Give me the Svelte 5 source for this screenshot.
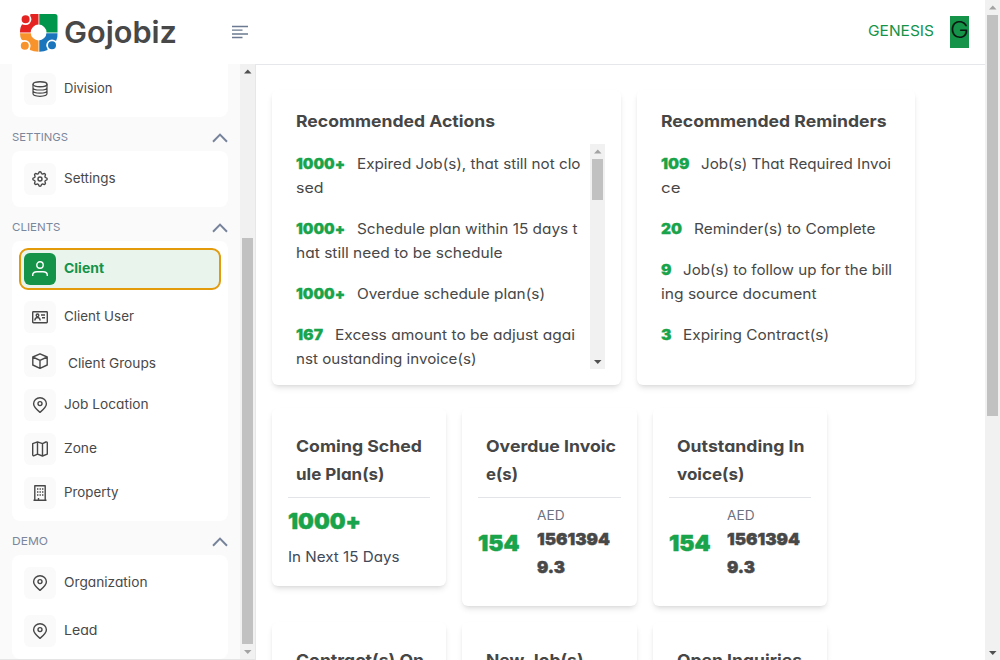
<script>
  // Widens a line of text to a given width, keeping its height.
  function fit(node, width) {
    const natural = node.getBoundingClientRect().width;
    node.style.width = `${width}px`;
    node.style.transform = `scaleX(${width / natural})`;
  }

  const settings = [{ icon: 'gear', label: 'Settings', w: 51.5 }];
  const clients = [
    { icon: 'user', label: 'Client', w: 40, active: true },
    { icon: 'card', label: 'Client User', w: 70 },
    { icon: 'box', label: 'Client Groups', w: 88, nudge: true },
    { icon: 'pin', label: 'Job Location', w: 84.5 },
    { icon: 'map', label: 'Zone', w: 33 },
    { icon: 'building', label: 'Property', w: 54.5 }
  ];
  const demo = [
    { icon: 'pin', label: 'Organization', w: 83.5 },
    { icon: 'pin', label: 'Lead', w: 33.5 }
  ];
  const groups = [
    { cls: 'first', items: [{ icon: 'db', label: 'Division', w: 48.5 }] },
    { title: 'SETTINGS', tw: 56, cls: '', items: settings },
    { title: 'CLIENTS', tw: 48.5, cls: 'clients', items: clients },
    { title: 'DEMO', tw: 36, cls: 'demo', items: demo }
  ];

  const actions = [
    { n: '1000+', nw: 49, lines: [['Expired Job(s), that still not clo', 223.5], ['sed', 27.5]] },
    { n: '1000+', nw: 49, lines: [['Schedule plan within 15 days t', 220.5], ['hat still need to be schedule', 206.5]] },
    { n: '1000+', nw: 49, lines: [['Overdue schedule plan(s)', 188]] },
    { n: '167', nw: 27, lines: [['Excess amount to be adjust agai', 240], ['nst oustanding invoice(s)', 180.5]] }
  ];
  const reminders = [
    { n: '109', nw: 28.5, lines: [['Job(s) That Required Invoi', 190], ['ce', 19.5]] },
    { n: '20', nw: 21, lines: [['Reminder(s) to Complete', 181.5]] },
    { n: '9', nw: 10.5, lines: [['Job(s) to follow up for the bill', 209], ['ing source document', 155.5]] },
    { n: '3', nw: 10.5, lines: [['Expiring Contract(s)', 146]] }
  ];
  const invoices = [
    { lines: [['Overdue Invoic', 130], ['e(s)', 32]] },
    { lines: [['Outstanding In', 127.5], ['voice(s)', 67.5]] }
  ];
  const lower = [
    ['Contract(s) On', 128],
    ['New Job(s)', 97.5],
    ['Open Inquiries', 125]
  ];
</script>

{#snippet icon(name)}
  <svg class="icon" viewBox="0 0 16 16" width="16" height="16">
    {#if name === 'db'}
      <ellipse cx="8" cy="3.2" rx="7" ry="2.5" />
      <path d="M1 3.2v9.4c0 1.500 3.100 2.700 7 2.700s7-1.200 7-2.700V3.200M1 6.400c0 1.500 3.100 2.600 7 2.600s7-1.100 7-2.600M1 9.600c0 1.500 3.100 2.600 7 2.600s7-1.100 7-2.600" stroke-width="1.200" />
    {:else if name === 'gear'}
      <circle cx="8" cy="8" r="2" />
      <path d="M6.6 2.2C7 .3 9 .3 9.4 2.2a1.2 1.2 0 0 0 1.7.7c1.7-1 3 .3 2 2a1.2 1.2 0 0 0 .7 1.7c1.9.4 1.9 2.4 0 2.8a1.2 1.2 0 0 0-.7 1.7c1 1.7-.3 3-2 2a1.2 1.2 0 0 0-1.7.7c-.4 1.9-2.4 1.9-2.8 0a1.2 1.2 0 0 0-1.7-.7c-1.7 1-3-.3-2-2a1.2 1.2 0 0 0-.7-1.7c-1.9-.4-1.9-2.4 0-2.8a1.2 1.2 0 0 0 .7-1.7c-1-1.7.3-3 2-2a1.2 1.2 0 0 0 1.7-.7Z" />
    {:else if name === 'user'}
      <circle cx="8" cy="4" r="3.2" />
      <path d="M.7 15v-1c0-2.2 2-3.3 4.3-3.3h6c2.300 0 4.300 1.100 4.300 3.300v1" />
    {:else if name === 'card'}
      <rect x=".7" y="2.7" width="14.6" height="11" rx=".7" />
      <circle cx="5.5" cy="6.3" r="1.3" />
      <path d="M2.800 11.500c.2-2 1.200-3 2.700-3s2.500 1 2.700 3M9 6h4M10 8.800h3" />
    {:else if name === 'box'}
      <path d="M8 .8 15.200 4v8L8 15.300.8 12V4ZM.8 4 8 7.300 15.200 4M8 7.300v8" />
    {:else if name === 'pin'}
      <path d="M8 15.400C4.300 12.400 1.600 9.700 1.600 6.800a6.400 6.100 0 0 1 12.800 0c0 2.900-2.700 5.600-6.400 8.600Z" />
      <circle cx="8" cy="6.600" r="2" />
    {:else if name === 'map'}
      <path d="M.7 2.600 5.500.9l5 1.700L13.800 1c.8-.3 1.500.1 1.500.9v11.200l-4.800 1.900-5-1.900L2.200 14.600c-.8.3-1.500-.1-1.500-.9ZM5.500.9v12.200M10.500 2.600V15" />
    {:else}
      <path d="M2.800 15V.8h10.400V15M1.500 15.200h13" />
      <path class="dots" d="M5.700 3.200v8M8.200 3.200v8M10.700 3.200v8" />
      <path d="M6.500 15v-2" />
    {/if}
  </svg>
{/snippet}

{#snippet entries(list)}
  <div class="entries">
    {#each list as e}
      <div class="entry">
        <div><b class="num" use:fit={e.nw}>{e.n}</b><span class="txt" use:fit={e.lines[0][1]}>{e.lines[0][0]}</span></div>
        {#if e.lines[1]}<div><span class="txt" use:fit={e.lines[1][1]}>{e.lines[1][0]}</span></div>{/if}
      </div>
    {/each}
  </div>
{/snippet}

{#snippet arrow(dir, dark)}
  <svg class="arrow" class:dark viewBox="0 0 15 15" width="15" height="15">
    <path d={dir === 'up' ? 'M4 9.500h7.500L7.750 5.500Z' : 'M4 6h7.500L7.750 10Z'} />
  </svg>
{/snippet}

<div class="app">
  <div class="page">
    <header>
      <div class="brand">
        <svg width="38" height="38" viewBox="0 0 38 38">
          <path fill="#e52421" d="M0 18.400Q0 13 2 10.500L9 8l1.500-8h8v18.400Z" />
          <path fill="#00964b" d="M19.300 0h15.700q2.500 0 2.500 2.500v15.900H19.300Z" />
          <path fill="#f7932a" d="M0 19.300h18.500v18.400q-5 0-8.500-1.700L8 29l-6.500-3.500Q0 23 0 19.300Z" />
          <path fill="#1b75bc" d="M19.300 19.300h18.200q.3 4-1.200 7.200L29 29l-1.500 7q-3 1.700-8.200 1.700Z" />
          <circle cx="18.600" cy="18.500" r="7.900" fill="#fff" />
          <g stroke="#fff" stroke-width="1.800">
            <circle cx="5.600" cy="5.300" r="4.900" fill="#e52421" />
            <circle cx="4.800" cy="31.800" r="4.900" fill="#f7932a" />
            <circle cx="32" cy="31.300" r="4.900" fill="#1b75bc" />
          </g>
        </svg>
        <div class="wordmark"><span use:fit={113}>Gojobiz</span></div>
      </div>
      <svg class="menu" width="16" height="14" viewBox="0 0 16 14">
        <path d="M0 1.500h16M0 5.200h10.500M0 9h16M0 12.500h10.500" />
      </svg>
      <div class="account">
        <span use:fit={66}>GENESIS</span>
        <div class="avatar"><span use:fit={19}>G</span></div>
      </div>
    </header>

    <div class="body">
      <nav>
        <div class="groups">
          {#each groups as g}
            {#if g.title}
              <div class="heading">
                <span use:fit={g.tw}>{g.title}</span>
                <svg width="16" height="10" viewBox="0 0 16 10"><path d="M1 8.700 8 1.600l7 7.100" /></svg>
              </div>
            {/if}
            <div class="group {g.cls}">
              {#each g.items as i}
                <div class="item" class:active={i.active}>
                  <div class="tile">{@render icon(i.icon)}</div>
                  <div class="label" class:nudge={i.nudge}><span use:fit={i.w}>{i.label}</span></div>
                </div>
              {/each}
            </div>
          {/each}
        </div>
        <div class="bar side">
          {@render arrow('up', true)}
          <div class="thumb"></div>
          {@render arrow('down', false)}
        </div>
      </nav>

      <main>
        <div class="row top">
          <section class="panel wide">
            <h2><span use:fit={199}>Recommended Actions</span></h2>
            <div class="scroller">
              {@render entries(actions)}
              <div class="bar inner">
                {@render arrow('up', false)}
                <div class="thumb"></div>
                {@render arrow('down', true)}
              </div>
            </div>
          </section>
          <section class="panel">
            <h2><span use:fit={225.5}>Recommended Reminders</span></h2>
            <div class="scroller">{@render entries(reminders)}</div>
          </section>
        </div>

        <div class="row stats">
          <section class="stat short">
            <h2><span use:fit={126}>Coming Sched</span><br /><span use:fit={88.5}>ule Plan(s)</span></h2>
            <div class="big"><span use:fit={73}>1000+</span></div>
            <div class="note"><span use:fit={111.5}>In Next 15 Days</span></div>
          </section>
          {#each invoices as v}
            <section class="stat">
              <h2><span use:fit={v.lines[0][1]}>{v.lines[0][0]}</span><br /><span use:fit={v.lines[1][1]}>{v.lines[1][0]}</span></h2>
              <div class="amounts">
                <div class="big"><span use:fit={41.5}>154</span></div>
                <div class="money">
                  <div class="cur"><span use:fit={27.5}>AED</span></div>
                  <b use:fit={73}>1561394</b><br /><b use:fit={28}>9.3</b>
                </div>
              </div>
            </section>
          {/each}
        </div>

        <div class="row stats">
          {#each lower as l}
            <section class="stat"><h2><span use:fit={l[1]}>{l[0]}</span></h2></section>
          {/each}
        </div>
      </main>
    </div>
  </div>
  <div class="bar window">
    {@render arrow('up', false)}
    <div class="thumb"></div>
    {@render arrow('down', true)}
  </div>
</div>

<style>
  :global(body) { margin: 0; overflow: hidden; background: #fff; }
  .app {
    display: flex; width: 1000px; height: 660px; overflow: hidden;
    font-family: Inter, sans-serif; font-feature-settings: 'cv11', 'calt' 0;
    font-size: 14.500px; font-weight: 370; line-height: 24px; color: #484848; white-space: nowrap;
  }
  .app :global(*) { box-sizing: border-box; }
  span, b { display: inline-block; transform-origin: 0 50%; }
  .page { width: 985px; height: 660px; display: flex; flex-direction: column; }
  header { height: 64px; flex: none; display: flex; align-items: center; padding: 0 16px 0 20px; }
  .brand { display: flex; align-items: center; gap: 5px; width: 212px; }
  .brand svg { margin-top: 1px; overflow: visible; }
  .wordmark { font-size: 30px; font-weight: 620; line-height: 40px; margin-left: 1px; }
  .menu { stroke: #6b7a90; stroke-width: 1.300; fill: none; }
  .account { margin-left: auto; display: flex; align-items: center; gap: 16px; color: #149349; font-size: 15px; }
  .account > span { margin-top: -3px; }
  .avatar { width: 19px; height: 32px; background: #149349; color: #0b1710; font-size: 23px; font-weight: 350; line-height: 28px; }

  .body { display: flex; flex: 1; height: 596px; }
  nav { width: 256px; background: #fafafa; border-right: 1px solid #e5e7eb; border-bottom: 1px solid #e5e5e5; display: flex; overflow: hidden; }
  .groups { width: 240px; padding: 0 12px; flex: none; }
  .group { background: #fff; border-radius: 8px; padding: 12px; display: flex; flex-direction: column; gap: 12px; }
  .first { border-radius: 0 0 8px 8px; padding-top: 9px; }
  .demo { gap: 16px; }
  .heading { height: 34px; padding-top: 13px; display: flex; align-items: flex-start; justify-content: space-between; color: #7b879c; font-size: 11px; font-weight: 400; line-height: 16px; }
  .heading span { margin-top: -1px; }
  .heading svg { margin-top: 3px; fill: none; stroke: #76839a; stroke-width: 2; }
  .item { display: flex; height: 32px; gap: 8px; font-size: 13px; line-height: 30px; }
  .tile { width: 32px; height: 32px; border-radius: 6px; background: #fafafa; display: flex; align-items: center; justify-content: center; flex: none; }
  .icon { fill: none; stroke: #484848; stroke-width: 1.400; stroke-linejoin: round; }
  .dots { stroke-width: 1.400; stroke-dasharray: 1.500 1.500; }
  .nudge { padding: 3px 0 0 4px; }
  .active { margin: -5px -5px -1px; width: 202px; height: 42px; padding: 3px; border: 2px solid #e39a0b; border-radius: 9px; background: #e8f4ec; color: #149349; font-weight: 700; }
  .active .tile { background: #149349; }
  .active .icon { stroke: #fff; }

  .bar { width: 15px; background: #f1f1f1; display: flex; flex-direction: column; justify-content: space-between; flex: none; }
  .thumb { width: 11px; margin: 0 2px; background: #c1c1c1; }
  .arrow { display: block; fill: #a3a3a3; flex: none; }
  .arrow.dark { fill: #505050; }
  .side { height: 595px; }
  .side .thumb { height: 406px; margin-top: auto; }
  .inner { height: 225px; }
  .inner .thumb { height: 41px; margin-bottom: auto; }
  .window { height: 660px; }
  .window .thumb { height: 401px; margin-bottom: auto; }

  main { width: 729px; height: 596px; border-top: 1px solid #e5e7eb; padding: 24px 16px; display: flex; flex-direction: column; overflow: hidden; }
  .row { display: flex; gap: 16px; flex: none; align-items: flex-start; }
  .top { margin-bottom: 23px; padding-top: 1px; }
  section { background: #fff; border-radius: 6px; box-shadow: 0 4px 6px -1px rgba(0, 0, 0, 0.100), 0 2px 4px -2px rgba(0, 0, 0, 0.100); flex: none; }
  .panel { width: 278px; height: 295px; padding: 17px 16px 16px 23.500px; }
  .panel.wide { width: 349px; padding-left: 23.500px; }
  h2 { margin: 0; font-size: 16.500px; line-height: 28px; font-weight: 650; color: #464646; }
  .scroller { display: flex; height: 225px; margin-top: 9px; }
  .entries { width: 294.500px; flex: none; padding-top: 8px; display: flex; flex-direction: column; gap: 17px; }
  .num { color: #19a34a; font-weight: 900; margin-right: 12px; -webkit-text-stroke: 0.300px #19a34a; }

  .stats { margin-bottom: 16px; }
  .stat { width: 174.330px; height: 198px; padding: 24px 16px 0; }
  .stat.short { height: 178px; }
  .stat h2 { height: 66px; padding: 0 0 9px 8px; border-bottom: 1px solid #e2e4e7; }
  .big { color: #19a34a; font-size: 22px; font-weight: 900; line-height: 32px; padding-top: 7px; -webkit-text-stroke: 0.500px #19a34a; }
  .note { margin-top: 8px; color: #414a59; font-size: 14.500px; }
  .amounts { display: flex; gap: 16px; padding-top: 5px; }
  .amounts .big { width: 42.500px; padding-top: 24px; }
  .money { line-height: 28px; font-size: 16.500px; }
  .money b { font-weight: 900; vertical-align: top; margin-top: -1px; margin-bottom: 1px; -webkit-text-stroke: 0.400px #464646; }
  .cur { font-size: 13px; line-height: 24px; color: #6b7280; height: 23px; }
  .cur span { vertical-align: top; }
</style>
